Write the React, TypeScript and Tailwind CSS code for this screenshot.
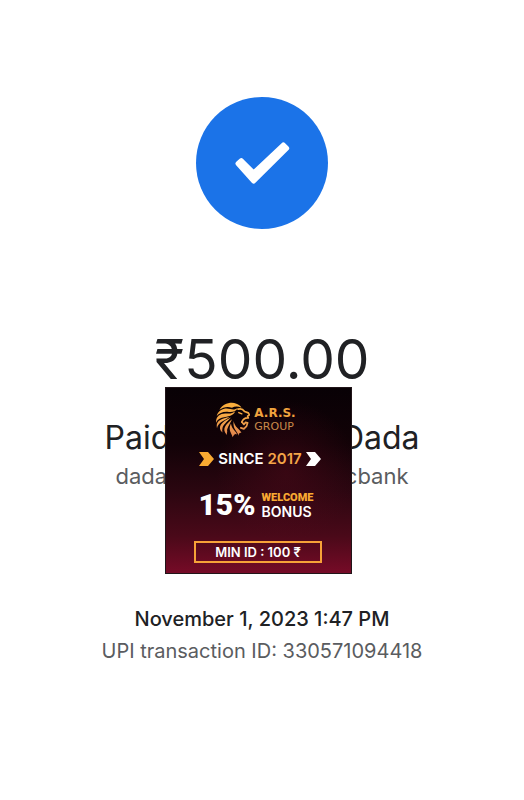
import React from "react";

interface ReceiptProps {
  amount?: string;
  date?: string;
  transactionId?: string;
}

const SuccessBadge = () => (
  <svg
    className="size-33"
    viewBox="0 0 396 396"
    role="img"
    aria-label="Payment successful"
  >
    <circle cx="198" cy="198" r="198" fill="#1b73e8" />
    <path
      d="M126 200 136 191 173 228 262 144 272 154 173 252Z"
      fill="#fff"
      stroke="#fff"
      strokeWidth="15"
      strokeLinejoin="round"
    />
  </svg>
);

const LionLogo = () => (
  <svg
    className="h-9 w-[34px] shrink-0"
    viewBox="0 0 100 104"
    fill="none"
    aria-hidden="true"
  >
    <defs>
      <linearGradient
        id="mane"
        gradientUnits="userSpaceOnUse"
        x1="50"
        y1="0"
        x2="50"
        y2="104"
      >
        <stop offset="0" stopColor="#fbb03b" />
        <stop offset="0.5" stopColor="#f5a548" />
        <stop offset="1" stopColor="#dd8050" />
      </linearGradient>
    </defs>
    {/* swept mane locks */}
    <g fill="url(#mane)">
      <path d="M10 22C20 4 44-3 60 4C67 6 73 11 75 16C65 11 55 11 47 16C34 11 21 14 10 22Z" />
      <path d="M2 40C8 20 28 15 42 20C51 23 58 21 64 17C58 29 45 30 34 28C20 27 9 32 2 40Z" />
      <path d="M0 60C-1 40 14 31 32 33C43 34 50 31 56 27C51 39 39 41 27 43C12 45 3 51 0 60Z" />
      <path d="M3 76C-2 56 14 47 40 43C30 52 19 53 12 61C7 66 4 71 3 76Z" />
      <path d="M19 89C3 75 14 58 44 45C33 57 20 67 19 76C18 81 18 85 19 89Z" />
      <path d="M32 96C16 79 28 66 47 50C39 68 31 77 33 86C32 90 32 93 32 96Z" />
      <path d="M49 103C47 91 34 83 44 62C46 80 60 84 62 95C57 91 52 95 49 103Z" />
      <path d="M66 98C64 85 48 80 52 55C54 73 70 78 75 90C70 88 67 92 66 98Z" />
    </g>
    {/* face profile */}
    <g
      stroke="url(#mane)"
      strokeWidth="5"
      strokeLinecap="round"
      strokeLinejoin="round"
    >
      <path d="M65 20C74 17 80 21 84 27L95 31L98 37L93 41L95 46C84 45 79 50 76 58" />
      <path d="M76 58L82 65L87 59L93 60L90 70L82 78L73 75" />
      <path d="M67 30L76 34" strokeWidth="4" />
    </g>
  </svg>
);

const Chevron = ({ className }: { className: string }) => (
  <svg
    className={`h-3.5 w-[15px] shrink-0 ${className}`}
    viewBox="0 0 15 14"
    fill="currentColor"
    aria-hidden="true"
  >
    <path d="M0 0H9L15 7L9 14H0L5 7Z" />
  </svg>
);

const PromoCard = () => (
  <aside className="flex h-[187px] w-[187px] flex-col items-center border border-[#211519] bg-[radial-gradient(circle_at_65%_45%,#5a0a1c66,transparent_45%),linear-gradient(#080105,#120207_30%,#2a0610_55%,#4a0919_80%,#760b27)] font-['Inter','Noto_Sans',sans-serif] text-white">
    <div className="mt-3.5 mr-1 flex items-center gap-1">
      <LionLogo />
      <div className="font-['DejaVu_Sans',sans-serif] text-[#f0a33e]">
        <p className="text-[12px] leading-[13px] font-bold">A.R.S.</p>
        <p className="text-[11px] leading-[13px] text-[#c98949]">GROUP</p>
      </div>
    </div>

    <div className="mt-3 mr-1 ml-2 flex items-center gap-1">
      <Chevron className="text-[#f9aa32]" />
      <p className="text-[15px] leading-[18px] font-semibold whitespace-nowrap">
        SINCE <span className="text-[#f4a548]">2017</span>
      </p>
      <Chevron className="text-white" />
    </div>

    <div className="mt-[23px] flex items-center gap-1.5 pr-1">
      <p className="font-['Roboto',sans-serif] text-[30px] leading-7 font-black">
        15%
      </p>
      <div>
        <p className="font-['Roboto',sans-serif] text-[11px] leading-[14px] font-black text-[#f9aa32]">
          WELCOME
        </p>
        <p className="text-[14px] leading-[14px] font-semibold">BONUS</p>
      </div>
    </div>

    <p className="mt-[22px] w-32 border-2 border-[#f7a238] text-center text-[13px] leading-[18px] font-semibold whitespace-nowrap">
      MIN ID : 100 ₹
    </p>
  </aside>
);

const App = ({
  amount = "₹500.00",
  date = "November 1, 2023 1:47 PM",
  transactionId = "330571094418",
}: ReceiptProps) => {
  return (
    <main className="flex min-h-screen flex-col items-center bg-white pt-[97px] font-['Inter','Noto_Sans',sans-serif] text-[#202124]">
      <SuccessBadge />

      <section className="relative mt-[98px] flex w-full flex-col items-center">
        <h1 className="text-[55px] leading-16">{amount}</h1>
        <div className="mt-[23px] flex w-[315px] justify-between text-[32px] leading-12">
          <span>Paid</span>
          <span>Dada</span>
        </div>
        <div className="flex w-[293px] justify-between text-[22px] leading-7 text-[#5a5c60]">
          <span>dada</span>
          <span>cbank</span>
        </div>
        <div className="absolute inset-x-0 top-15 flex justify-center pr-2">
          <PromoCard />
        </div>
      </section>

      <footer className="mt-[113px] text-center">
        <p className="text-[20px] leading-8 font-medium">{date}</p>
        <p className="text-[20px] leading-8 text-[#5a5c60]">
          UPI transaction ID: {transactionId}
        </p>
      </footer>
    </main>
  );
};

export default App;
